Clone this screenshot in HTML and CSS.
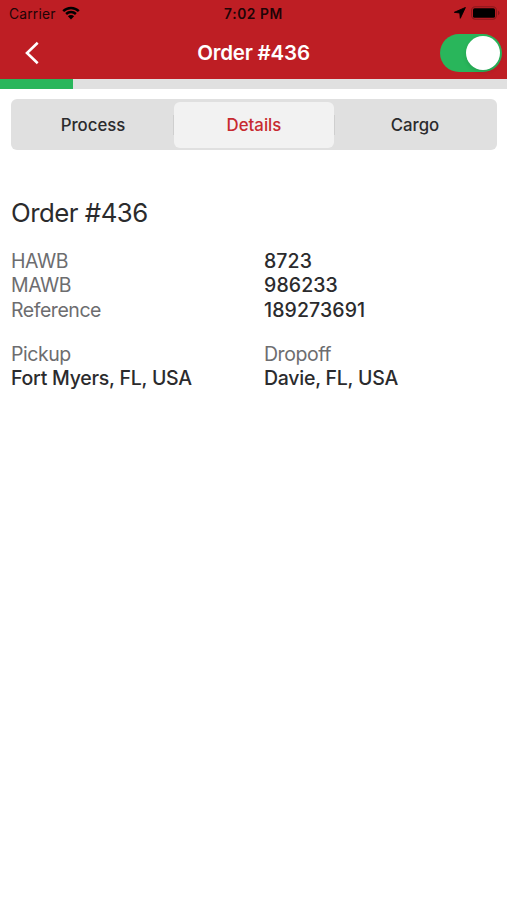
FILE: index.html
```html
<!DOCTYPE html>
<html lang="en">
<head>
    <meta charset="UTF-8">
    <meta name="viewport" content="width=device-width, initial-scale=1.0">
    <title>Order #436</title>
    <link rel="stylesheet" href="styles.css">
</head>
<body>
    <header class="header">
        <div class="status-bar">
            <div class="status-left">
                <span class="carrier">Carrier</span>
                <svg class="wifi" width="18" height="14" viewBox="0 0 18 14">
                    <path d="M1.2 5.1a11.2 11.2 0 0 1 15.6 0M4.1 8a7.1 7.1 0 0 1 9.8 0" fill="none" stroke="currentColor" stroke-width="2.5"/>
                    <path d="M9 13.4L5.9 10.3a4.4 4.4 0 0 1 6.2 0z" fill="currentColor"/>
                </svg>
            </div>
            <span class="time">7:02 PM</span>
            <div class="status-right">
                <svg class="location" width="12" height="12" viewBox="0 0 12 12">
                    <path d="M11.4.5L.3 5.3l5.5.7.5 5.3z" fill="currentColor" stroke="currentColor" stroke-width=".9" stroke-linejoin="round"/>
                </svg>
                <svg class="battery" width="30" height="14" viewBox="0 0 30 14">
                    <rect x=".6" y=".8" width="24.8" height="12.4" rx="3.6" fill="none" stroke="#8b181c" stroke-width="1.1"/>
                    <rect x="2" y="2.2" width="22" height="9.6" rx="1.6" fill="#000"/>
                    <path d="M27 4.8c2 .7 2 3.7 0 4.4z" fill="#8b181c"/>
                </svg>
            </div>
        </div>
        <div class="nav">
            <a href="#" class="back" aria-label="Back">
                <svg width="16" height="24" viewBox="0 0 16 24">
                    <path d="M13.7 1.8L3 12l10.7 10.2" fill="none" stroke="#fff" stroke-width="2.6"/>
                </svg>
            </a>
            <h1 class="nav-title">Order #436</h1>
            <label class="switch">
                <input type="checkbox" checked>
                <span class="knob"></span>
            </label>
        </div>
    </header>
    <div class="progress"><div class="progress-fill"></div></div>

    <div class="tabs">
        <button class="tab">Process</button>
        <span class="divider"></span>
        <button class="tab active">Details</button>
        <span class="divider"></span>
        <button class="tab">Cargo</button>
    </div>

    <main class="order">
        <h2>Order #436</h2>
        <div class="row">
            <span class="label">HAWB</span>
            <span class="value number">8723</span>
        </div>
        <div class="row">
            <span class="label">MAWB</span>
            <span class="value number">986233</span>
        </div>
        <div class="row">
            <span class="label">Reference</span>
            <span class="value number">189273691</span>
        </div>
        <div class="row places">
            <div>
                <div class="label">Pickup</div>
                <div class="value">Fort Myers, FL, USA</div>
            </div>
            <div>
                <div class="label">Dropoff</div>
                <div class="value">Davie, FL, USA</div>
            </div>
        </div>
    </main>
</body>
</html>
```

FILE: styles.css
```css
* { box-sizing: border-box; }
body { margin: 0; background-color: #fff; color: #2b2b2d; font-family: Inter, "Liberation Sans", sans-serif; }

.header { height: 79px; background-color: #be1e24; }
.status-bar { display: grid; grid-template-columns: 1fr auto 1fr; align-items: center; height: 27px; padding: 0 7px; color: #200406; font-size: 13.8px; }
.status-left { display: flex; align-items: center; gap: 6px; padding-left: 2px; }
.carrier { letter-spacing: 0.2px; }
.wifi { margin-top: -2px; color: #000; }
.time { font-weight: 600; letter-spacing: 0.6px; }
.status-right { display: flex; align-items: center; justify-content: flex-end; gap: 5px; color: #000; }
.location { margin-top: -1px; }
.battery { margin: -1px -1px 0 0; }

.nav { display: grid; grid-template-columns: 1fr auto 1fr; align-items: center; height: 51px; padding: 0 5px; }
.back { display: flex; padding-left: 19px; }
.nav-title { margin: 0; color: #fff; font-size: 20.5px; font-weight: 600; letter-spacing: -0.2px; }
.switch { justify-self: end; display: flex; justify-content: flex-end; width: 62px; height: 38px; padding: 2px; border-radius: 19px; background-color: #29b65b; }
.switch input { display: none; }
.knob { width: 34px; height: 34px; border-radius: 50%; background-color: #fff; box-shadow: 0 2px 4px rgba(0, 0, 0, 0.12); }

.progress { height: 10px; background-color: #e0e0e0; }
.progress-fill { width: 73px; height: 100%; background-color: #29b65b; }

.tabs { display: flex; align-items: center; height: 51px; margin: 10px 10px 0 11px; padding: 2px; border-radius: 6px; background-color: #e0e0e0; }
.tab { flex: 1; height: 46px; padding: 0; border: none; border-radius: 6px; background: none; color: #2b2b2d; font-family: inherit; font-size: 16.8px; font-weight: 500; }
.tab.active { background-color: #f2f2f2; color: #c72a30; }
.divider { width: 1px; height: 20px; background-color: #cfcfcf; }

.order { padding: 46px 11px 0; font-size: 19.5px; line-height: 24.5px; }
h2 { margin: 0 0 19.5px; font-size: 25.8px; font-weight: 400; line-height: 33px; letter-spacing: -0.5px; }
.row { display: grid; grid-template-columns: 253px 1fr; }
.places { margin-top: 19.5px; }
.label { color: #6d6d6f; letter-spacing: -0.45px; }
.value { font-weight: 500; letter-spacing: -0.25px; }
.number { letter-spacing: 0.1px; }
```
